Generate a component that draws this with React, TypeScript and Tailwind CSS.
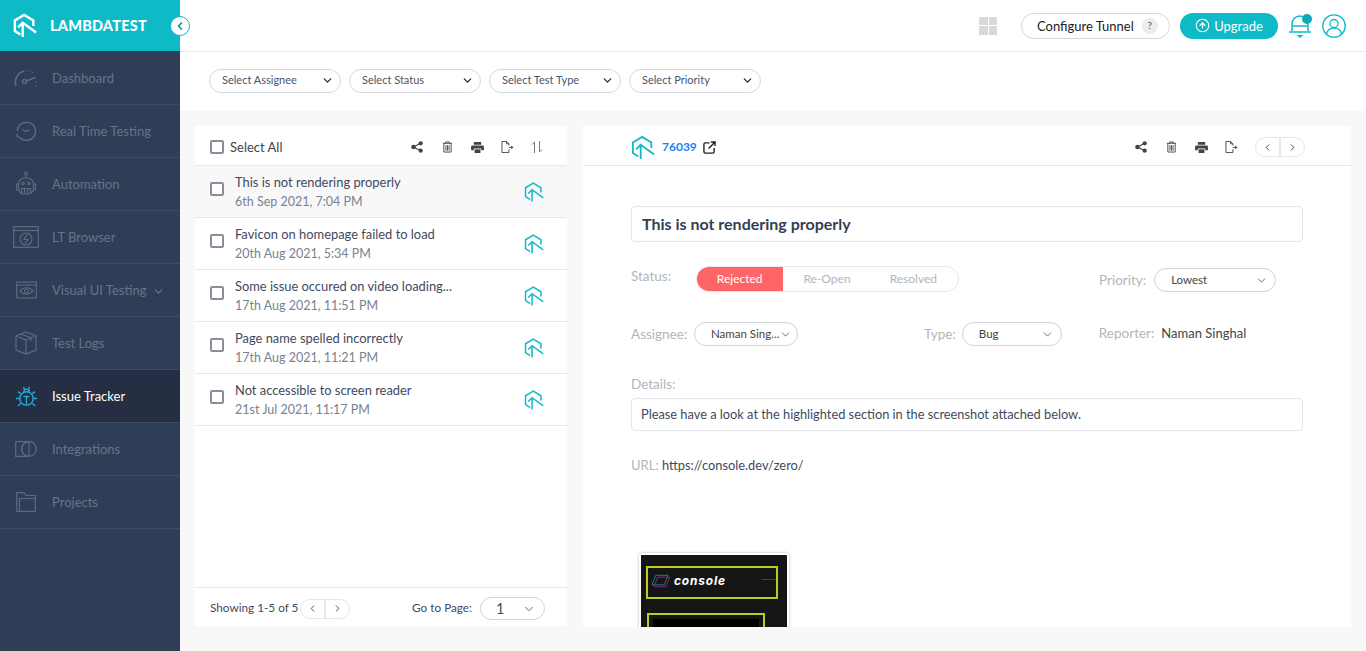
import React from "react";
import { ChevronDown, ChevronLeft, ChevronRight, ArrowUpCircle } from "lucide-react";

const Logo = ({ className, sw = 2 }: { className: string; sw?: number }) => (
  <svg viewBox="0 0 26 26" className={className} fill="none" stroke="currentColor" strokeWidth={sw} strokeLinejoin="miter">
    <path d="M8 22.8 L2 19 V7.5 L12 1.5 L22 7.5 V13.5" />
    <path d="M10.5 25.5 V10.5 M5.5 15 L10.5 10 L25 20.5" />
  </svg>
);

const Cell = ({ children }: { children: React.ReactNode }) => (
  <span className="w-[30px] flex items-center justify-center">{children}</span>
);

const Share = () => (
  <svg viewBox="0 0 12 12" className="w-[12px] h-[12px]" fill="#444">
    <circle cx="2.5" cy="6" r="2.3" /><circle cx="9.7" cy="2.3" r="2.1" /><circle cx="9.7" cy="9.7" r="2.1" />
    <path d="M2.5 6 L9.7 2.3 M2.5 6 L9.7 9.7" stroke="#444" strokeWidth="1.2" />
  </svg>
);
const Trash = () => (
  <svg viewBox="0 0 12 13" className="w-[11px] h-[12px]" fill="none" stroke="#444" strokeWidth="1">
    <path d="M1 2.5 H11 M4 2.5 V1 H8 V2.5 M2 2.5 V12 H10 V2.5 M4.3 4.5 V10.5 M6 4.5 V10.5 M7.7 4.5 V10.5" />
  </svg>
);
const Printer = () => (
  <svg viewBox="0 0 14 12" className="w-[13px] h-[11px]" fill="#444">
    <path d="M3 0 H11 V3 H3 Z" /><path d="M1.5 3.7 H12.5 A1.5 1.5 0 0 1 14 5.2 V9 H11 V7 H3 V9 H0 V5.2 A1.5 1.5 0 0 1 1.5 3.7 Z" />
    <path d="M3.8 8 H10.2 V12 H3.8 Z" />
  </svg>
);
const Export = () => (
  <svg viewBox="0 0 14 13" className="w-[13px] h-[12px]" fill="none" stroke="#444" strokeWidth="1">
    <path d="M8.5 9 V12.5 H1 V0.5 H6 L8.5 3 V5 M6 0.5 V3 H8.5" />
    <path d="M8.5 7 H11" strokeWidth="1" /><path d="M11 5 L13.5 7 L11 9 Z" fill="#444" stroke="none" />
  </svg>
);
const Sort = () => (
  <svg viewBox="0 0 12 12" className="w-[12px] h-[12px]" fill="none" stroke="#777" strokeWidth="1">
    <path d="M3.5 12 V1 L1 3.5 M8.5 0 V11 L11 8.5" />
  </svg>
);

const stroke = { fill: "none", stroke: "#5d6b80", strokeWidth: 1.2 };
const Icons: Record<string, React.ReactNode> = {
  dash: (
    <svg viewBox="0 0 24 20" className="w-[24px] h-[20px]" {...stroke}>
      <path d="M2 18 A11.5 11.5 0 0 1 10.5 3" strokeWidth="1.7" />
      <path d="M13 2 V3 M16 2.5 L15.7 3.5 M19 4 L18.5 5 M22 10 L21 10.5 M22.5 14 H21.5 M22 18 L21 17.5" strokeWidth="1.3" />
      <circle cx="10.5" cy="13.5" r="2" strokeWidth="1.5" /><path d="M12.5 13 L21 9.5" strokeWidth="1.7" />
    </svg>
  ),
  real: (
    <svg viewBox="0 0 22 22" className="w-[20px] h-[20px]" {...stroke}>
      <path d="M1.5 11 A10 10 0 1 1 4.5 18.5" strokeWidth="1.6" /><path d="M1 14 L1.5 17 L4.5 18.5 M7 9.5 L11 11.5 L15 9.5" strokeWidth="1.4" />
    </svg>
  ),
  auto: (
    <svg viewBox="0 0 24 26" className="w-[24px] h-[26px]" {...stroke}>
      <circle cx="12" cy="2.5" r="1.5" /><path d="M12 4 V7" />
      <rect x="4.5" y="7" width="15" height="16" rx="6" /><path d="M4.5 13 H2.5 V19 H4.5 M19.5 13 H21.5 V19 H19.5" />
      <circle cx="9" cy="12.5" r="1.2" /><circle cx="15" cy="12.5" r="1.2" />
      <path d="M7.5 23 V17.5 H16.5 V23 M10.5 17.5 V23 M13.5 17.5 V23" />
    </svg>
  ),
  lt: (
    <svg viewBox="0 0 26 22" className="w-[26px] h-[22px]" {...stroke}>
      <rect x="0.7" y="0.7" width="24.6" height="20.6" /><path d="M0.7 4.5 H25.3" />
      <circle cx="13" cy="13" r="6" /><path d="M14 8.5 L11 13.5 H15 L12 17.5" />
    </svg>
  ),
  visual: (
    <svg viewBox="0 0 22 18" className="w-[21px] h-[18px]" {...stroke}>
      <rect x="0.7" y="0.7" width="20.6" height="16.6" /><path d="M0.7 3.8 H21.3" />
      <path d="M4 10 C 8 5.5, 14 5.5, 18 10 C 14 14.5, 8 14.5, 4 10 Z" /><circle cx="11" cy="10" r="2" />
    </svg>
  ),
  logs: (
    <svg viewBox="0 0 22 24" className="w-[22px] h-[24px]" {...stroke}>
      <path d="M11 1 L21 5 V19 L11 23 L1 19 V5 Z M1 5 L11 9 L21 5 M11 9 V23 M6 3 L16 7 V10" />
    </svg>
  ),
  issue: (
    <svg viewBox="0 0 24 24" className="w-[23px] h-[23px]" fill="none" stroke="#23a6d5" strokeWidth="1.5">
      <circle cx="12" cy="14" r="7" /><path d="M9 7.5 A3 3 0 0 1 15 7.5 M9 2 L10 5.5 M15 2 L14 5.5 M12 12 V21 M9 12 H15 M5 14 H1 M23 14 H19 M6 19 L3 22 M18 19 L21 22 M6 9 L3 7 M18 9 L21 7" />
    </svg>
  ),
  integ: (
    <svg viewBox="0 0 22 16" className="w-[22px] h-[16px]" {...stroke}>
      <path d="M14 0.7 H0.7 V15.3 H14" /><circle cx="14" cy="8" r="7.3" /><path d="M14 .7 V15.3" /><path d="M11 1.5 A 7 7 0 0 0 11 14.5" />
    </svg>
  ),
  proj: (
    <svg viewBox="0 0 20 20" className="w-[20px] h-[20px]" {...stroke}>
      <path d="M0.7 19.3 V0.7 H8 L10 3.5 H19.3 V19.3 Z" /><path d="M3.5 19.3 V6.5 H19.3" />
    </svg>
  ),
};

const nav: [string, string, boolean?][] = [
  ["dash", "Dashboard"],
  ["real", "Real Time Testing"],
  ["auto", "Automation"],
  ["lt", "LT Browser"],
  ["visual", "Visual UI Testing", true],
  ["logs", "Test Logs"],
  ["issue", "Issue Tracker"],
  ["integ", "Integrations"],
  ["proj", "Projects"],
];

const issues = [
  ["This is not rendering properly", "6th Sep 2021, 7:04 PM"],
  ["Favicon on homepage failed to load", "20th Aug 2021, 5:34 PM"],
  ["Some issue occured on video loading...", "17th Aug 2021, 11:51 PM"],
  ["Page name spelled incorrectly", "17th Aug 2021, 11:21 PM"],
  ["Not accessible to screen reader", "21st Jul 2021, 11:17 PM"],
];

const Check = () => <span className="block w-[14px] h-[14px] border-2 border-[#8d8d99] rounded-[2px] bg-white shrink-0" />;

const Select = ({ label, w }: { label: string; w: string }) => (
  <div className={`${w} h-[24px] rounded-full border border-[#d5d8de] flex items-center justify-between pl-[12px] pr-[6px] text-[11px] text-[#4a5568]`}>
    <span>{label}</span>
    <ChevronDown size={13} strokeWidth={2.2} className="text-[#222]" />
  </div>
);

const FormSelect = ({ label, w, pl = "pl-[16px]" }: { label: string; w: string; pl?: string }) => (
  <div className={`${w} h-[24px] rounded-full border border-[#d0d3da] flex items-center justify-between ${pl} pr-[7px] text-[11.5px] text-[#444] shrink-0 whitespace-nowrap`}>
    <span>{label}</span>
    <ChevronDown size={13} strokeWidth={1.4} className="text-[#444] shrink-0" />
  </div>
);

const Pager = () => (
  <div className="w-[50px] h-[20px] rounded-full border border-[#e6e7ea] flex text-[#444]">
    <span className="flex-1 flex items-center justify-center border-r-2 border-[#e6e7ea]"><ChevronLeft size={11} /></span>
    <span className="flex-1 flex items-center justify-center"><ChevronRight size={11} /></span>
  </div>
);

export default function App() {
  return (
    <div className="w-[1366px] h-[651px] overflow-hidden flex bg-[#f8f8f8] text-[#3a4559]" style={{ fontFamily: "Lato, 'Open Sans', sans-serif" }}>
      <aside className="w-[180px] shrink-0 bg-[#2f3d57] relative">
        <div className="h-[51px] bg-[#0fbac7] flex items-center pl-[13px] gap-[13px] text-white">
          <Logo className="w-[24px] h-[25px]" sw={2.6} />
          <span className="text-[14.5px] font-black tracking-[0.2px]">LAMBDATEST</span>
        </div>
        <div className="absolute left-[170px] top-[16px] w-[20px] h-[20px] rounded-full bg-white border border-[#0fbac7] flex items-center justify-center text-[#0d8fa8] z-10">
          <ChevronLeft size={12} strokeWidth={3.5} />
        </div>
        <nav className="pt-[1px]">
          {nav.map(([ico, label, caret]) => {
            const active = label === "Issue Tracker";
            return (
              <div key={label} className={`h-[53px] border-b border-[#3e4b65] flex items-center ${active ? "bg-[#252e42]" : ""}`}>
                <span className="w-[52px] pl-[12px] pr-[12px] flex items-center justify-center shrink-0">{Icons[ico]}</span>
                <span className={`text-[13px] pt-[1px] ${active ? "text-white" : "text-[#687488]"}`}>{label}</span>
                {caret && <ChevronDown size={13} strokeWidth={2.4} className="ml-[6px] mt-[2px] text-[#687488]" />}
              </div>
            );
          })}
        </nav>
      </aside>

      <div className="flex-1 flex flex-col min-w-0">
        <header className="h-[52px] bg-white border-b border-[#ececec] flex items-center justify-end shrink-0">
          <div className="grid grid-cols-2 gap-[1px] w-[18px] h-[18px] mr-[24px]">
            <i className="bg-[#d8d8d8]" /><i className="bg-[#d8d8d8]" /><i className="bg-[#d8d8d8]" /><i className="bg-[#d8d8d8]" />
          </div>
          <div className="w-[149px] h-[26px] rounded-full border border-[#d8d8d8] flex items-center pl-[15px] gap-[8px] text-[13px] text-[#222] mr-[10px]">
            <span className="pt-[2px]">Configure Tunnel</span>
            <span className="w-[16px] h-[16px] rounded-full bg-[#ececec] flex items-center justify-center text-[10px] text-[#555]">?</span>
          </div>
          <div className="w-[98px] h-[26px] rounded-full bg-[#0fbac7] flex items-center justify-center gap-[4px] text-[13px] text-white mr-[10px]">
            <ArrowUpCircle size={15} strokeWidth={1.8} />
            <span className="pt-[2px]">Upgrade</span>
          </div>
          <div className="relative w-[24px] h-[26px] mr-[10px]">
            <svg viewBox="0 0 24 26" className="w-[24px] h-[26px]" fill="none" stroke="#0fbac7" strokeWidth="1.5">
              <path d="M4 18 V11 A8 8 0 0 1 20 11 V18 M1 19 H23 M4 13 H20" />
              <path d="M8.5 22 H15.5 L12 25 Z" fill="#0fbac7" stroke="none" />
            </svg>
            <span className="absolute right-[0px] top-[1px] w-[10px] h-[10px] rounded-full bg-[#0fa9bb]" />
          </div>
          <div className="mr-[20px]">
            <svg viewBox="0 0 24 24" className="w-[24px] h-[24px]" fill="none" stroke="#0fbac7" strokeWidth="1.3">
              <circle cx="12" cy="12" r="11.2" /><circle cx="12" cy="9.5" r="4" /><path d="M4.5 20 C 5.5 15.5, 9 14, 12 14 C 15 14, 18.5 15.5, 19.5 20" />
            </svg>
          </div>
        </header>

        <div className="h-[59px] bg-white flex items-center pl-[29px] gap-[8px] shrink-0 pb-[2px]">
          <Select label="Select Assignee" w="w-[132px]" />
          <Select label="Select Status" w="w-[132px]" />
          <Select label="Select Test Type" w="w-[132px]" />
          <Select label="Select Priority" w="w-[132px]" />
        </div>

        <main className="flex gap-[16px] pl-[15px] pr-[15px] pt-[15px] h-[516px]">
          <section className="w-[372px] h-[500px] bg-white flex flex-col shrink-0">
            <div className="h-[40px] border-b border-[#e8e8e8] flex items-center pl-[15px] pr-[15px] pt-[3px] shrink-0">
              <Check />
              <span className="ml-[6px] text-[13px] text-[#444] pt-[1px]">Select All</span>
              <div className="ml-auto flex items-center">
                <Cell><Share /></Cell><Cell><Trash /></Cell><Cell><Printer /></Cell><Cell><Export /></Cell><Cell><Sort /></Cell>
              </div>
            </div>
            <div className="flex-1">
              {issues.map(([t, d], i) => (
                <div key={t} className={`h-[52px] border-b border-[#e8e8e8] flex items-center pl-[15px] pr-[23px] ${i === 0 ? "bg-[#f8f8f8]" : ""}`}>
                  <span className="-mt-[6px]"><Check /></span>
                  <div className="ml-[11px] flex-1 leading-[19px]">
                    <div className="text-[12.9px] text-[#3f4a5e]">{t}</div>
                    <div className="text-[12.5px] text-[#7a8291]">{d}</div>
                  </div>
                  <span className="text-[#17b9c9]"><Logo className="w-[20px] h-[20px]" sw={2} /></span>
                </div>
              ))}
            </div>
            <div className="h-[39px] border-t border-[#e8e8e8] flex items-center pl-[15px] pr-[22px] pt-[3px] shrink-0 text-[11.75px] text-[#3f4a5e]">
              <span className="mr-[2px] -mt-[1px]">Showing 1-5 of 5</span>
              <Pager />
              <span className="ml-auto mr-[8px] -mt-[1px]">Go to Page:</span>
              <div className="w-[65px] h-[23px] rounded-full border border-[#d0d3da] flex items-center justify-between pl-[15px] pr-[8px] text-[14.5px]">
                1 <ChevronDown size={14} strokeWidth={1.4} />
              </div>
            </div>
          </section>

          <section className="w-[768px] h-[501px] bg-white overflow-hidden flex flex-col shrink-0">
            <div className="h-[40px] border-b border-[#e8e8e8] flex items-center pl-[48px] pr-[46px] pt-[3px] shrink-0">
              <span className="text-[#17b9c9]"><Logo className="w-[24px] h-[25px]" sw={2} /></span>
              <span className="ml-[7px] text-[12px] font-bold text-[#1a82f0]">76039</span>
              <svg viewBox="0 0 14 14" className="ml-[6px] w-[13px] h-[13px]" fill="none" stroke="#222" strokeWidth="1.5">
                <path d="M7 2 H2.5 A1.5 1.5 0 0 0 1 3.5 V11.5 A1.5 1.5 0 0 0 2.5 13 H10.5 A1.5 1.5 0 0 0 12 11.5 V7.5" />
                <path d="M6 8 L13 1 M8.5 1 H13 V5.5" />
              </svg>
              <div className="ml-auto flex items-center">
                <Cell><Share /></Cell><Cell><Trash /></Cell><Cell><Printer /></Cell><Cell><Export /></Cell>
                <span className="ml-[9px]"><Pager /></span>
              </div>
            </div>
            <div className="pl-[48px] pr-[48px] pt-[40px]">
              <div className="h-[36px] border border-[#e4e5e8] rounded-[4px] flex items-center pl-[10px] text-[16px] font-bold text-[#333f52]">This is not rendering properly</div>

              <div className="flex items-start mt-[24px] h-[26px] text-[13.5px] text-[#b2b5bb]">
                <span className="w-[65px]">Status:</span>
                <div className="w-[263px] h-[26px] rounded-full border border-[#e8e9ec] flex text-[12px] overflow-hidden">
                  <span className="w-[88px] -ml-px bg-[#ff6567] text-white flex items-center justify-center">Rejected</span>
                  <span className="w-[88px] flex items-center justify-center">Re-Open</span>
                  <span className="w-[88px] flex items-center justify-center pr-[2px]">Resolved</span>
                </div>
                <span className="ml-[140px] mr-[8px] pt-[4px]">Priority:</span>
                <span className="pt-[2px]"><FormSelect label="Lowest" w="w-[122px]" /></span>
              </div>

              <div className="flex items-center mt-[30px] h-[24px] text-[13.5px] text-[#b2b5bb]">
                <span className="w-[63px]">Assignee:</span>
                <FormSelect label="Naman Sing..." w="w-[104px]" />
                <span className="ml-[126px] mr-[6px]">Type:</span>
                <FormSelect label="Bug" w="w-[100px]" />
                <span className="ml-[37px] mr-[7px] -mt-[2px]">Reporter:</span>
                <span className="text-[13px] text-[#444] -mt-[1px]">Naman Singhal</span>
              </div>

              <div className="mt-[29px] text-[13.5px] leading-[18px] text-[#b2b5bb]">Details:</div>
              <div className="mt-[5px] h-[33px] border border-[#e4e5e8] rounded-[4px] flex items-center pl-[9px] text-[12.8px] text-[#3f4a5e]">
                Please have a look at the highlighted section in the screenshot attached below.
              </div>
              <div className="mt-[25px] text-[13px] leading-[18px] text-[#b2b5bb]">
                URL: <span className="text-[#3f4a5e] text-[12.85px]">https://console.dev/zero/</span>
              </div>

              <div className="mt-[79px] ml-[8px] w-[150px] h-[120px] bg-[#151515] rounded-[3px] border-2 border-white shadow-[0_0_3px_rgba(0,0,0,0.3)] pl-[5px] pr-[9px] pt-[11px]">
                <div className="h-[33px] border-2 border-[#bccc22] flex items-center pl-[3px] pb-[3px] relative">
                  <svg viewBox="0 0 20 14" className="w-[19px] h-[14px]" fill="none" strokeWidth="1">
                    <path d="M5 1 H18 L14 11 H1 Z" stroke="#1d8a6b" /><path d="M7 3 H20 L16 13 H3 Z" stroke="#8a1da0" />
                  </svg>
                  <span className="ml-[4px] text-[12px] font-bold italic tracking-[0.8px] text-white" style={{ fontFamily: "Inter, sans-serif" }}>console</span>
                  <span className="absolute right-0 top-[11px] w-[14px] h-px bg-[#444]" />
                </div>
                <div className="mt-[14px] ml-[1px] w-[118px] h-[40px] border-2 border-[#bccc22] p-[4px]"><div className="h-full bg-black" /></div>
              </div>
            </div>
          </section>
        </main>
      </div>
    </div>
  );
}
